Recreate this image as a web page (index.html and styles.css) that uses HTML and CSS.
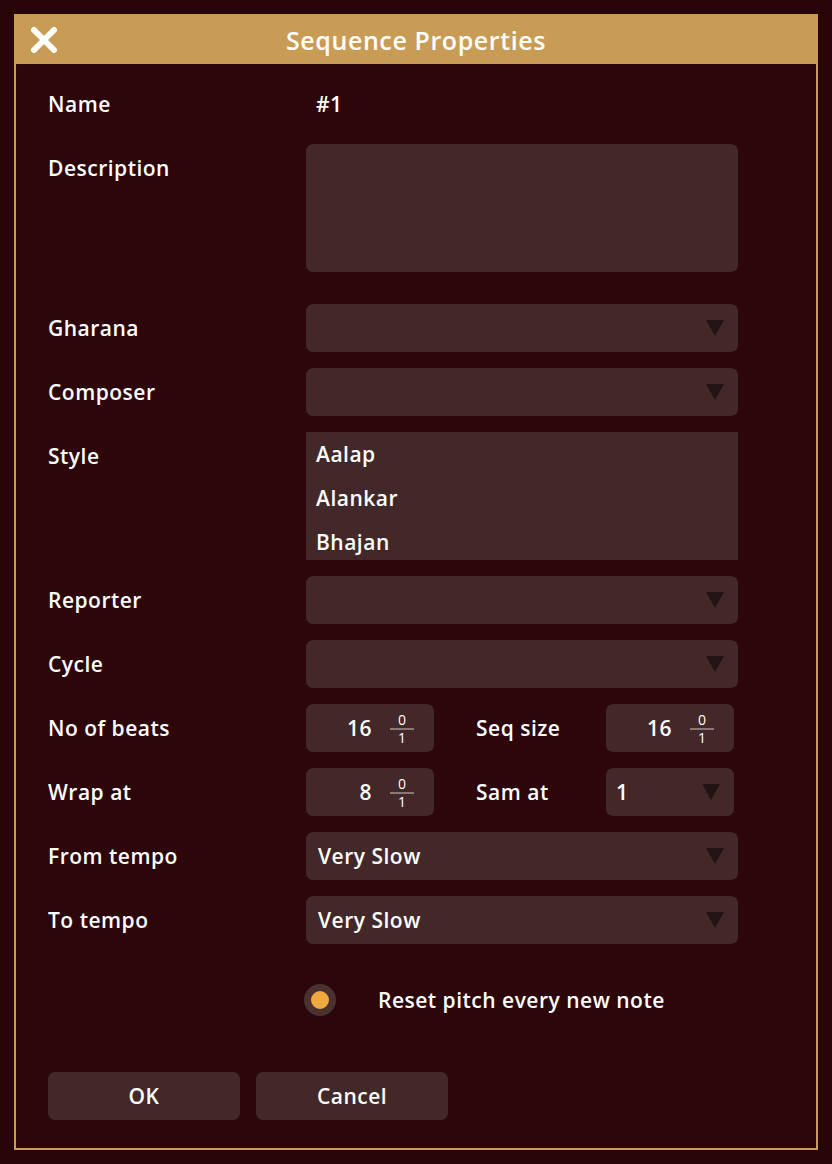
FILE: index.html
```html
<!DOCTYPE html>
<html lang="en">
<head>
    <meta charset="UTF-8">
    <title>Sequence Properties</title>
    <link rel="stylesheet" href="styles.css">
</head>
<body>
    <div class="dialog">
        <div class="dialog-header">
            <span class="close-btn">
                <svg width="28" height="26" viewBox="0 0 28 26">
                    <path d="M4 3 L24 23 M24 3 L4 23" stroke="#fff" stroke-width="6" stroke-linecap="round"/>
                </svg>
            </span>
            <h1>Sequence Properties</h1>
        </div>

        <div class="dialog-body">
            <div class="form-row">
                <label>Name</label>
                <div class="value">#1</div>
            </div>

            <div class="form-row desc-row">
                <label>Description</label>
                <div class="field textarea"></div>
            </div>

            <div class="form-row">
                <label>Gharana</label>
                <div class="field select"><span></span><i class="arrow"></i></div>
            </div>

            <div class="form-row">
                <label>Composer</label>
                <div class="field select"><span></span><i class="arrow"></i></div>
            </div>

            <div class="form-row">
                <label>Style</label>
                <ul class="listbox">
                    <li>Aalap</li>
                    <li>Alankar</li>
                    <li>Bhajan</li>
                </ul>
            </div>

            <div class="form-row">
                <label>Reporter</label>
                <div class="field select"><span></span><i class="arrow"></i></div>
            </div>

            <div class="form-row">
                <label>Cycle</label>
                <div class="field select"><span></span><i class="arrow"></i></div>
            </div>

            <div class="form-row">
                <label>No of beats</label>
                <div class="pair">
                    <div class="field number">
                        <span class="num">16</span>
                        <span class="frac"><span>0</span><span>1</span></span>
                    </div>
                    <label class="inner-label">Seq size</label>
                    <div class="field number">
                        <span class="num">16</span>
                        <span class="frac"><span>0</span><span>1</span></span>
                    </div>
                </div>
            </div>

            <div class="form-row">
                <label>Wrap at</label>
                <div class="pair">
                    <div class="field number">
                        <span class="num">8</span>
                        <span class="frac"><span>0</span><span>1</span></span>
                    </div>
                    <label class="inner-label">Sam at</label>
                    <div class="field select small"><span>1</span><i class="arrow"></i></div>
                </div>
            </div>

            <div class="form-row">
                <label>From tempo</label>
                <div class="field select"><span>Very Slow</span><i class="arrow"></i></div>
            </div>

            <div class="form-row">
                <label>To tempo</label>
                <div class="field select"><span>Very Slow</span><i class="arrow"></i></div>
            </div>

            <div class="check-row">
                <span class="radio"><span class="dot"></span></span>
                <span class="check-label">Reset pitch every new note</span>
            </div>

            <div class="buttons">
                <button class="btn">OK</button>
                <button class="btn">Cancel</button>
            </div>
        </div>
    </div>
</body>
</html>
```

FILE: styles.css
```css
:root {
    --gold: #c99c55;
    --bg: #2c0608;
    --field: #432829;
    --arrow: #231414;
}

* {
    margin: 0;
    padding: 0;
    box-sizing: border-box;
}

body {
    background: #270507;
    font-family: "Open Sans", "DejaVu Sans", sans-serif;
    font-weight: 600;
    letter-spacing: 0.5px;
    color: #fff;
    padding: 14px;
}

.dialog {
    width: 804px;
    height: 1136px;
    border: 2px solid var(--gold);
    background: var(--bg);
}

.dialog-header {
    position: relative;
    height: 48px;
    background: var(--gold);
    display: flex;
    align-items: center;
    justify-content: center;
}

.dialog-header h1 {
    font-size: 25px;
    font-weight: 600;
    letter-spacing: 0.6px;
    color: #fff;
}

.close-btn {
    position: absolute;
    left: 14px;
    top: 11px;
    display: flex;
}

.dialog-body {
    padding: 16px 32px 0;
    display: flex;
    flex-direction: column;
    gap: 16px;
}

.form-row {
    display: flex;
    align-items: flex-start;
    min-height: 48px;
}

.form-row > label {
    width: 258px;
    flex-shrink: 0;
    font-size: 21px;
    line-height: 48px;
}

.value {
    font-size: 21px;
    line-height: 48px;
    padding-left: 10px;
}

.desc-row {
    margin-bottom: 16px;
}

.field {
    background: var(--field);
    border-radius: 7px;
    height: 48px;
    width: 432px;
    font-size: 21px;
}

.textarea {
    height: 128px;
}

.select {
    display: flex;
    align-items: center;
    justify-content: space-between;
    padding: 0 14px 0 12px;
}

.select.small {
    width: 128px;
    padding-left: 10px;
}

.arrow {
    width: 0;
    height: 0;
    border-left: 9px solid transparent;
    border-right: 9px solid transparent;
    border-top: 16px solid var(--arrow);
}

.listbox {
    list-style: none;
    background: var(--field);
    width: 432px;
    height: 128px;
}

.listbox li {
    font-size: 21px;
    line-height: 44px;
    height: 44px;
    padding-left: 10px;
}

.pair {
    display: flex;
    align-items: center;
}

.inner-label {
    width: 172px;
    padding-left: 42px;
    font-size: 21px;
}

.number {
    width: 128px;
    display: flex;
    align-items: center;
    justify-content: flex-end;
    padding-right: 20px;
}

.num {
    margin-right: 18px;
}

.frac {
    display: flex;
    flex-direction: column;
    align-items: center;
    width: 24px;
    font-size: 14px;
    font-weight: 500;
    letter-spacing: 0;
    line-height: 15px;
}

.frac span:first-child {
    border-bottom: 2px solid #8b7676;
    width: 24px;
    text-align: center;
    padding-bottom: 1px;
}

.check-row {
    display: flex;
    align-items: center;
    margin-top: 16px;
    padding-left: 256px;
    height: 48px;
}

.radio {
    width: 32px;
    height: 32px;
    border-radius: 50%;
    background: #4a3131;
    display: flex;
    align-items: center;
    justify-content: center;
}

.dot {
    width: 18px;
    height: 18px;
    border-radius: 50%;
    background: #f0aa40;
}

.check-label {
    margin-left: 42px;
    font-size: 21px;
}

.buttons {
    display: flex;
    gap: 16px;
    margin-top: 32px;
}

.btn {
    width: 192px;
    height: 48px;
    border: none;
    border-radius: 7px;
    background: var(--field);
    color: #fff;
    font-family: inherit;
    font-weight: 600;
    letter-spacing: 0.5px;
    font-size: 21px;
    cursor: pointer;
}
```
